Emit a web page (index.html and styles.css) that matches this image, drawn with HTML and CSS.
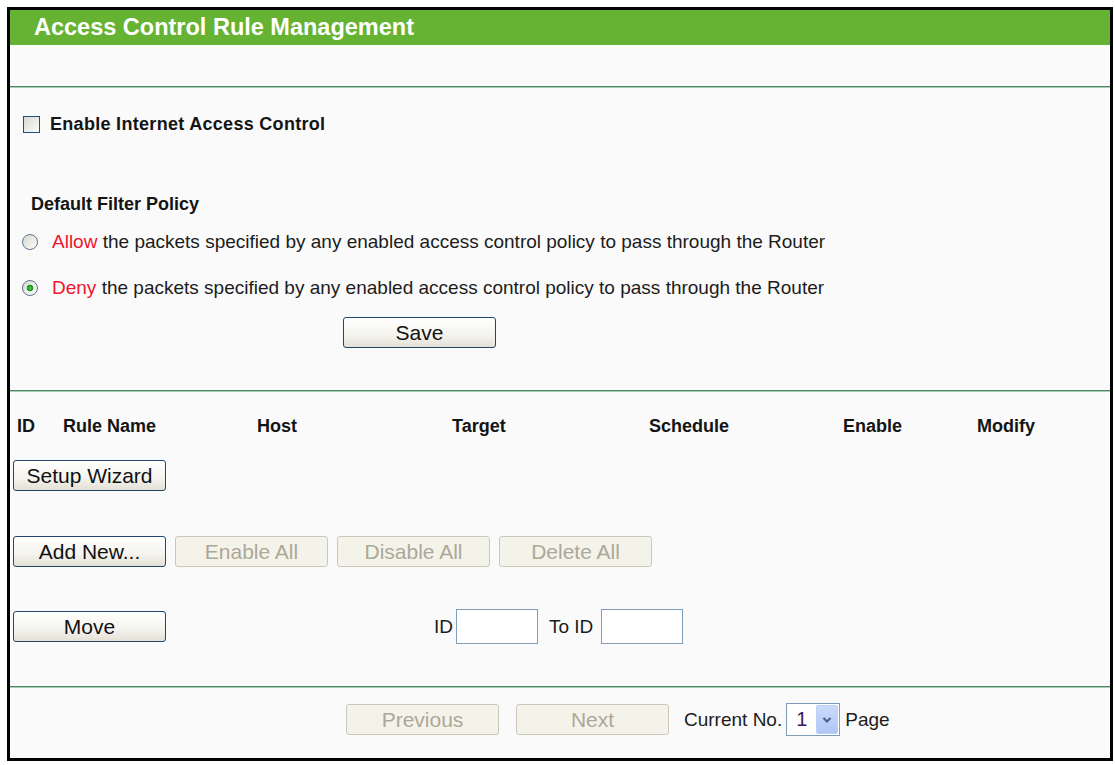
FILE: index.html
```html
<!DOCTYPE html>
<html lang="en">
<head>
  <meta charset="UTF-8" />
  <title>Access Control Rule Management</title>
  <link rel="stylesheet" href="styles.css">
</head>
<body>
  <div class="frame">
    <div class="title">Access Control Rule Management</div>
    <div class="title-gap"></div>
    <div class="rule"></div>

    <div class="policy">
      <label class="row enable-row">
        <input type="checkbox" class="check" />
        <b>Enable Internet Access Control</b>
      </label>
      <div class="row label-row">Default Filter Policy</div>
      <label class="row radio-row allow-row">
        <input type="radio" name="policy" class="radio" />
        <span><span class="red">Allow</span> the packets specified by any enabled access control policy to pass through the Router</span>
      </label>
      <label class="row radio-row deny-row">
        <input type="radio" name="policy" class="radio" checked />
        <span><span class="red">Deny</span> the packets specified by any enabled access control policy to pass through the Router</span>
      </label>
      <div class="save-row"><button class="btn">Save</button></div>
    </div>

    <div class="rule"></div>

    <div class="rules">
      <div class="table-head">
        <span>ID</span>
        <span>Rule Name</span>
        <span>Host</span>
        <span>Target</span>
        <span>Schedule</span>
        <span>Enable</span>
        <span>Modify</span>
      </div>
      <div class="btn-row wizard-row"><button class="btn">Setup Wizard</button></div>
      <div class="btn-row add-row">
        <button class="btn">Add New...</button>
        <button class="btn" disabled>Enable All</button>
        <button class="btn" disabled>Disable All</button>
        <button class="btn" disabled>Delete All</button>
      </div>
      <div class="btn-row move-row">
        <button class="btn">Move</button>
        <span class="move-label">ID</span>
        <input type="text" class="text-box" />
        <span class="move-label to">To ID</span>
        <input type="text" class="text-box" />
      </div>
    </div>

    <div class="rule"></div>

    <div class="pager">
      <button class="btn" disabled>Previous</button>
      <button class="btn" disabled>Next</button>
      <span class="pager-label">Current No.</span>
      <div class="select">
        <span class="select-value">1</span>
        <span class="select-arrow">
          <svg width="10" height="8" viewBox="0 0 10 8"><polyline points="1.5,2 5,5.5 8.5,2" fill="none" stroke="#4d6185" stroke-width="2.2"/></svg>
        </span>
      </div>
      <span class="pager-label page">Page</span>
    </div>
  </div>
</body>
</html>
```

FILE: styles.css
```css
body {
  margin: 7px 0 0 7px;
  font-family: "Liberation Sans", Arial, sans-serif;
  font-size: 19px;
  color: #1c1c1c;
}

.frame {
  width: 1100px;
  height: 748px;
  border: 3px solid #000;
  background: #fafafa;
  display: flex;
  flex-direction: column;
}

.title {
  height: 35px;
  line-height: 35px;
  background: #66b233;
  color: #fff;
  font-size: 23.5px;
  font-weight: bold;
  padding-left: 24px;
}

.title-gap {
  height: 41px;
}

.rule {
  height: 1px;
  background: #4a8d62;
  border-bottom: 1px solid #a9cdb4;
}

.row {
  display: flex;
  align-items: center;
  height: 36px;
}

b, .label-row, .table-head {
  font-size: 18px;
  font-weight: bold;
  color: #141414;
}

.enable-row {
  margin-top: 18px;
  padding-left: 13px;
}

.enable-row b {
  margin-left: 10px;
  letter-spacing: 0.3px;
}

.label-row {
  margin-top: 44px;
  padding-left: 21px;
}

.radio-row {
  padding-left: 12px;
}

.radio-row > span {
  margin-left: 14px;
}

.allow-row {
  margin-top: 2px;
}

.deny-row {
  margin-top: 10px;
}

.red {
  color: #f0142e;
}

.check {
  appearance: none;
  margin: 0;
  width: 17px;
  height: 17px;
  border: 1px solid #1c5180;
  background: linear-gradient(135deg, #d8d8d2, #fdfdfb);
}

.radio {
  appearance: none;
  margin: 0;
  width: 16px;
  height: 16px;
  border: 1px solid #5d7591;
  border-radius: 50%;
  background: linear-gradient(135deg, #d8d8d2, #fdfdfb);
}

.radio:checked {
  background:
    radial-gradient(circle, #5fd05f 0, #21a121 2px, #1a8f1a 3px, transparent 3.6px),
    linear-gradient(135deg, #d8d8d2, #fdfdfb);
}

.save-row {
  margin-top: 11px;
  padding-left: 333px;
  height: 31px;
  margin-bottom: 42px;
}

.btn {
  width: 153px;
  height: 31px;
  margin: 0;
  padding: 0;
  font-family: "Liberation Sans", Arial, sans-serif;
  font-size: 21px;
  color: #111;
  border: 1px solid #23466d;
  border-radius: 3px;
  background: linear-gradient(#ffffff, #f4f3ee 60%, #e3e0d5);
}

.btn:disabled {
  color: #aca899;
  border-color: #cac8bb;
  background: #f4f3ea;
}

.table-head {
  display: grid;
  grid-template-columns: 46px 194px 195px 197px 194px 134px auto;
  align-items: center;
  height: 36px;
  margin-top: 16px;
  padding-left: 7px;
}

.btn-row {
  display: flex;
  align-items: center;
  gap: 9px;
  padding-left: 3px;
}

.wizard-row {
  margin-top: 16px;
}

.add-row {
  margin-top: 45px;
}

.move-row {
  margin-top: 42px;
  height: 35px;
  gap: 0;
  margin-bottom: 42px;
}

.move-label {
  margin-left: 268px;
  margin-right: 3px;
}

.move-label.to {
  margin-left: 11px;
  margin-right: 8px;
}

.text-box {
  width: 82px;
  height: 35px;
  box-sizing: border-box;
  margin: 0;
  border: 1px solid #7f9db9;
  background: #fff;
}

.pager {
  display: flex;
  align-items: center;
  height: 35px;
  margin-top: 14px;
  padding-left: 336px;
}

.pager .btn + .btn {
  margin-left: 17px;
}

.pager-label {
  margin-left: 15px;
}

.pager-label.page {
  margin-left: 5px;
}

.select {
  display: flex;
  align-items: center;
  width: 54px;
  height: 33px;
  box-sizing: border-box;
  margin-left: 4px;
  border: 1px solid #7f9db9;
  background: #fff;
}

.select-value {
  flex: 1;
  padding-left: 9px;
  font-size: 20px;
  color: #3a1760;
}

.select-arrow {
  display: flex;
  align-items: center;
  justify-content: center;
  width: 22px;
  height: 29px;
  margin-right: 1px;
  border-radius: 2px;
  background: linear-gradient(#cbdafc, #afc6f5);
  border: 1px solid #bccff7;
  box-sizing: border-box;
}
```
